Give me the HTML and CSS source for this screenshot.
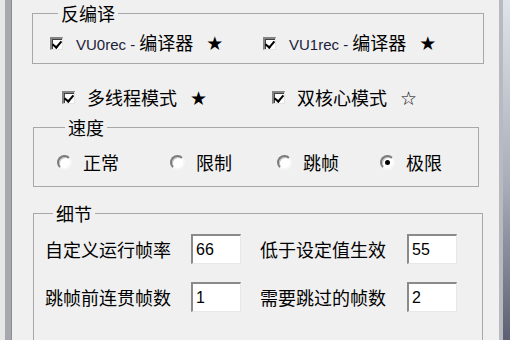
FILE: index.html
```html
<!DOCTYPE html>
<html lang="zh-CN">
<head>
    <meta charset="UTF-8">
    <title>设置</title>
    <link rel="stylesheet" href="styles.css">
</head>
<body>
    <div class="window">
        <div class="frame-left"></div>
        <div class="content">
            <fieldset class="group group-decomp">
                <legend>反编译</legend>
                <div class="check-row">
                    <label class="check wide"><span class="box checked"></span><span class="text"><span class="lat">VU0rec - </span>编译器<span class="star">★</span></span></label>
                    <label class="check"><span class="box checked"></span><span class="text"><span class="lat">VU1rec - </span>编译器<span class="star">★</span></span></label>
                </div>
            </fieldset>

            <div class="check-row loose">
                <label class="check mode"><span class="box checked"></span><span class="text">多线程模式<span class="star">★</span></span></label>
                <label class="check"><span class="box checked"></span><span class="text">双核心模式<span class="star">☆</span></span></label>
            </div>

            <fieldset class="group group-speed">
                <legend>速度</legend>
                <div class="radio-row">
                    <label class="radio"><span class="dot"></span>正常</label>
                    <label class="radio"><span class="dot"></span>限制</label>
                    <label class="radio"><span class="dot"></span>跳帧</label>
                    <label class="radio"><span class="dot on"></span>极限</label>
                </div>
            </fieldset>

            <fieldset class="group group-detail">
                <legend>细节</legend>
                <div class="fields">
                    <span class="field-label">自定义运行帧率</span>
                    <span class="edit">66</span>
                    <span class="field-label">低于设定值生效</span>
                    <span class="edit">55</span>
                    <span class="field-label">跳帧前连贯帧数</span>
                    <span class="edit">1</span>
                    <span class="field-label">需要跳过的帧数</span>
                    <span class="edit">2</span>
                </div>
            </fieldset>
        </div>
        <div class="frame-right"></div>
    </div>
</body>
</html>
```

FILE: styles.css
```css
* {
    margin: 0;
    padding: 0;
    box-sizing: border-box;
}

body {
    width: 510px;
    height: 340px;
    overflow: hidden;
    background-color: #f0f0f0;
    color: #000;
    font-family: "Noto Sans CJK SC", sans-serif;
    font-size: 18px;
    line-height: 20px;
}

.window {
    display: flex;
    height: 340px;
}

.frame-left {
    width: 12px;
    background-color: #a6a8ae;
    border-left: 5px solid #e6e6e6;
    border-right: 1px solid #8c8e94;
}

.frame-right {
    width: 11px;
    border-left: 4px solid #b8bac0;
    background: linear-gradient(#dfe3ea, #a8acb8 55%, #5c6072);
}

.content {
    flex: 1;
    overflow: hidden;
}

/* group boxes */
.group {
    border: 1px solid #a8a8a8;
    min-width: 0;
}

.group legend {
    margin-left: 8px;
    padding: 0 3px;
    line-height: 18px;
    height: 18px;
}

.group-decomp {
    width: 452px;
    margin: 4px 0 0 20px;
    padding: 11px 0 10px 17px;
}

.group-speed {
    width: 446px;
    margin: 11px 0 0 21px;
    padding: 16px 0 14px 23px;
}

.group-detail {
    width: 450px;
    margin: 17px 0 0 21px;
    padding: 12px 0 40px 11px;
}

/* checkboxes */
.check-row {
    display: flex;
    height: 20px;
}

.check-row.loose {
    margin: 23px 0 0 50px;
}

.check {
    display: flex;
    align-items: center;
    gap: 12px;
    white-space: nowrap;
}

.check.wide {
    width: 213px;
}

.check.mode {
    width: 210px;
}

.lat {
    font-family: "Liberation Sans", sans-serif;
    font-size: 15px;
    margin-left: 1px;
    white-space: pre;
    color: #1c1c3a;
}

.star {
    font-family: "DejaVu Sans", sans-serif;
    font-size: 19px;
    margin-left: 13px;
}

.box {
    position: relative;
    flex: none;
    width: 13px;
    height: 13px;
    background-color: #fff;
    border-top: 2px solid #848484;
    border-left: 2px solid #848484;
    border-right: 1px solid #e4e4e4;
    border-bottom: 1px solid #e4e4e4;
    box-shadow: inset 1px 1px 0 #404040;
}

.box.checked::after {
    content: "";
    position: absolute;
    left: 2px;
    top: 0px;
    width: 4px;
    height: 7px;
    border-right: 2px solid #000;
    border-bottom: 2px solid #000;
    transform: rotate(40deg);
}

/* radios */
.radio-row {
    display: grid;
    grid-template-columns: 113px 107px 103px auto;
    height: 20px;
}

.radio {
    display: flex;
    align-items: center;
    gap: 11px;
}

.dot {
    position: relative;
    flex: none;
    width: 15px;
    height: 15px;
    border-radius: 50%;
    background-color: #fff;
    border: 2px solid;
    border-color: #7a7a7a #f6f6f6 #f6f6f6 #7a7a7a;
    box-shadow: inset 1px 1px 0 #c4c4c4;
}

.dot.on::after {
    content: "";
    position: absolute;
    left: 3px;
    top: 3px;
    width: 5px;
    height: 5px;
    border-radius: 50%;
    background-color: #000;
}

/* detail fields */
.fields {
    display: grid;
    grid-template-columns: 146px 69px 147px 50px;
    grid-auto-rows: 30px;
    row-gap: 18px;
    align-items: center;
}

.field-label {
    white-space: nowrap;
}

.edit {
    width: 50px;
    height: 30px;
    padding-left: 3px;
    background-color: #fff;
    border-top: 2px solid #8a8a8a;
    border-left: 2px solid #8a8a8a;
    border-right: 1px solid #e8e8e8;
    border-bottom: 1px solid #e8e8e8;
    font-family: "Liberation Sans", sans-serif;
    font-size: 16px;
    line-height: 27px;
}
```
